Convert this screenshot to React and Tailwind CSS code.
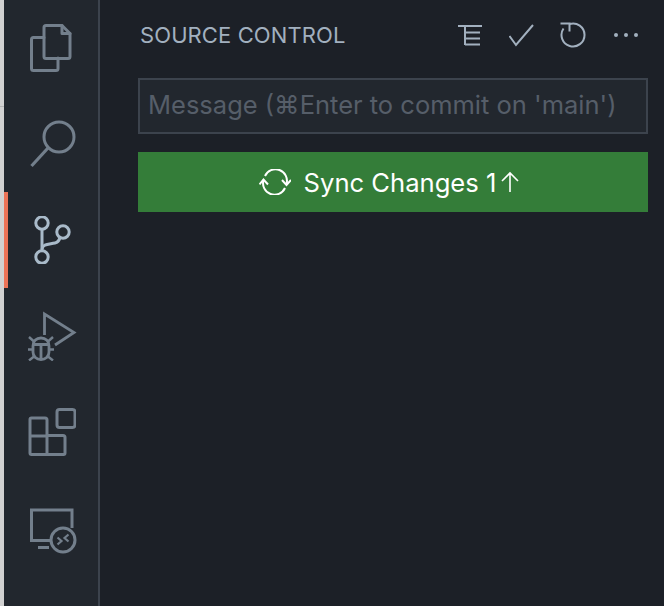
import { useState } from "react";

function Files() {
  return (
    <svg width="48" height="50" viewBox="0 0 48 50" fill="none" stroke="#737f8c" strokeWidth="3" strokeLinejoin="round" strokeLinecap="round">
      <path d="M15 14.500H4.500a2 2 0 0 0-2 2v29a2 2 0 0 0 2 2H27a2 2 0 0 0 2-2V35" />
      <path d="M15 4.500a2 2 0 0 1 2-2h16l8 8v23a2 2 0 0 1-2 2H17a2 2 0 0 1-2-2z" />
      <path d="M33 2.500v8h8" />
    </svg>
  );
}

function Search() {
  return (
    <svg width="46" height="48" viewBox="0 0 46 48" fill="none" stroke="#737f8c" strokeWidth="3">
      <circle cx="29" cy="17" r="15" />
      <path d="M18 28L1.500 46" strokeWidth="3.200" />
    </svg>
  );
}

function Branch() {
  return (
    <svg width="38" height="48" viewBox="0 0 38 48" fill="none" stroke="#a9bac9" strokeWidth="3">
      <circle cx="8" cy="7" r="6.200" />
      <circle cx="8" cy="41" r="6.200" />
      <circle cx="29" cy="16" r="6.200" />
      <path d="M8 13.500V34.500" />
      <path d="M8 33c1-5 6-4.500 13-6 3-.6 4-2 5-5.500" />
    </svg>
  );
}

function RunDebug() {
  return (
    <svg width="50" height="50" viewBox="0 0 50 50" fill="none" stroke="#737f8c" strokeWidth="2.800">
      <path d="M16.500 24V3L46 21.500L27 34" />
      <path d="M5 35c0-5 3.500-8 8-8s8 3 8 8v6c0 4.500-3.500 7.500-8 7.500s-8-3-8-7.500z" />
      <path d="M5 33.500h16M13 33.500v15" />
      <path d="M1 26l5 4.500M25 26l-5 4.500M0 38.500h5M26 38.500h-5M1 49.500l5-4M25 49.500l-5-4" strokeWidth="2.400" />
    </svg>
  );
}

function Extensions() {
  return (
    <svg width="48" height="48" viewBox="0 0 48 48" fill="none" stroke="#737f8c" strokeWidth="3" strokeLinejoin="round" className="mr-[3px]">
      <rect x="29" y="1.500" width="18" height="18" rx="2.500" />
      <path d="M3.500 10H17a2 2 0 0 1 2 2v15.500H35a2 2 0 0 1 2 2V45a1.500 1.500 0 0 1-1.500 1.500H3.500A1.500 1.500 0 0 1 2 45V11.500A1.500 1.500 0 0 1 3.500 10z" />
      <path d="M2 28h17M19 27.500v19" />
    </svg>
  );
}

function Remote() {
  return (
    <svg width="48" height="52" viewBox="0 0 48 52" fill="none" stroke="#737f8c" strokeWidth="3">
      <path d="M22 38.500H2.500V8H43V26" />
      <path d="M9 45.500H20" />
      <circle cx="34" cy="38" r="12" />
      <path d="M28.500 35.500l4 3.500-4 3.500M39.500 32.500l-4 3.500 4 3.500" strokeWidth="2.200" />
    </svg>
  );
}

function RailIcon({ children, active }) {
  return (
    <div className={`h-[96px] flex items-center justify-center border-l-4 ${active ? "border-[#ec7357]" : "border-transparent"}`}>
      {children}
    </div>
  );
}

function ActionIcon({ children, className }) {
  return <button className={`w-[26px] h-[26px] flex items-center justify-center ${className || ""}`}>{children}</button>;
}

export default function App() {
  const [message, setMessage] = useState("");

  return (
    <div className="w-[664px] h-[606px] flex bg-[#1c2027] overflow-hidden" style={{ fontFamily: "Inter, 'Noto Sans', sans-serif" }}>
      {/* strip of the window behind */}
      <div className="w-[4px] shrink-0 bg-[#d1d1d1] flex flex-col">
        <div className="h-[107px] border-b border-[#b5b5b5]" />
      </div>

      <div className="w-[96px] shrink-0 bg-[#22272e] border-r-2 border-[#3c434d]">
        <RailIcon><Files /></RailIcon>
        <RailIcon><Search /></RailIcon>
        <RailIcon active><Branch /></RailIcon>
        <RailIcon><RunDebug /></RailIcon>
        <RailIcon><Extensions /></RailIcon>
        <RailIcon><Remote /></RailIcon>
      </div>

      <div className="flex-1 pl-[38px] pr-[16px]">
        <div className="h-[78px] flex items-center pb-[8px]">
          <h2 className="text-[22px] text-[#a2b0bf] pl-[2px] tracking-[0.1px]">SOURCE CONTROL</h2>
          <div className="flex items-center gap-[25px] ml-[112px]">
            <ActionIcon>
              <svg width="26" height="24" viewBox="0 0 26 24" fill="none" stroke="#a2b0bf" strokeWidth="2">
                <path d="M1 3H25M8 3V22M8 9.500H23M8 15.500H23M8 21.500H23" />
              </svg>
            </ActionIcon>
            <ActionIcon className="ml-[1px]">
              <svg width="26" height="24" viewBox="0 0 26 24" fill="none" stroke="#a2b0bf" strokeWidth="2">
                <path d="M0.500 13L7 22L24 2" />
              </svg>
            </ActionIcon>
            <ActionIcon>
              <svg width="26" height="26" viewBox="0 0 26 26" fill="none" stroke="#a2b0bf" strokeWidth="2">
                <path d="M9.500 2A11.500 11.500 0 1 1 3.500 6.500" />
                <path d="M0.500 1.500H9.500V9.500" />
              </svg>
            </ActionIcon>
            <ActionIcon className="ml-[2px]">
              <svg width="26" height="6" viewBox="0 0 26 6" fill="#a2b0bf">
                <circle cx="3" cy="3" r="2" />
                <circle cx="13" cy="3" r="2" />
                <circle cx="23" cy="3" r="2" />
              </svg>
            </ActionIcon>
          </div>
        </div>

        <input
          value={message}
          onChange={(e) => setMessage(e.target.value)}
          placeholder="Message (⌘Enter to commit on 'main')"
          className="block w-full h-[56px] pl-[8px] pr-[4px] pb-[4px] bg-[#22272e] border-2 border-[#3c434d] text-[25.500px] outline-none placeholder:text-[#565e69]"
        />

        <button className="w-full h-[60px] mt-[18px] pr-[7px] bg-[#347d39] flex items-center justify-center text-white text-[25.600px]">
          <svg width="32" height="26" viewBox="0 0 32 26" fill="none" stroke="#ffffff" strokeWidth="2" className="mr-[13px]">
            <path d="M27.500 15A11.500 11.500 0 0 0 6 7" />
            <path d="M4.500 11A11.500 11.500 0 0 0 26 19" />
            <path d="M23 11l4.500 5 4.500-5M0.500 15.500l4-5 4.500 5" />
          </svg>
          <span className="pt-[2px]">Sync Changes 1</span>
          <svg width="20" height="22" viewBox="0 0 20 22" fill="none" stroke="#ffffff" strokeWidth="1.600" className="ml-[4px]">
            <path d="M10 21V2M2 10L10 2L18 10" />
          </svg>
        </button>
      </div>
    </div>
  );
}
